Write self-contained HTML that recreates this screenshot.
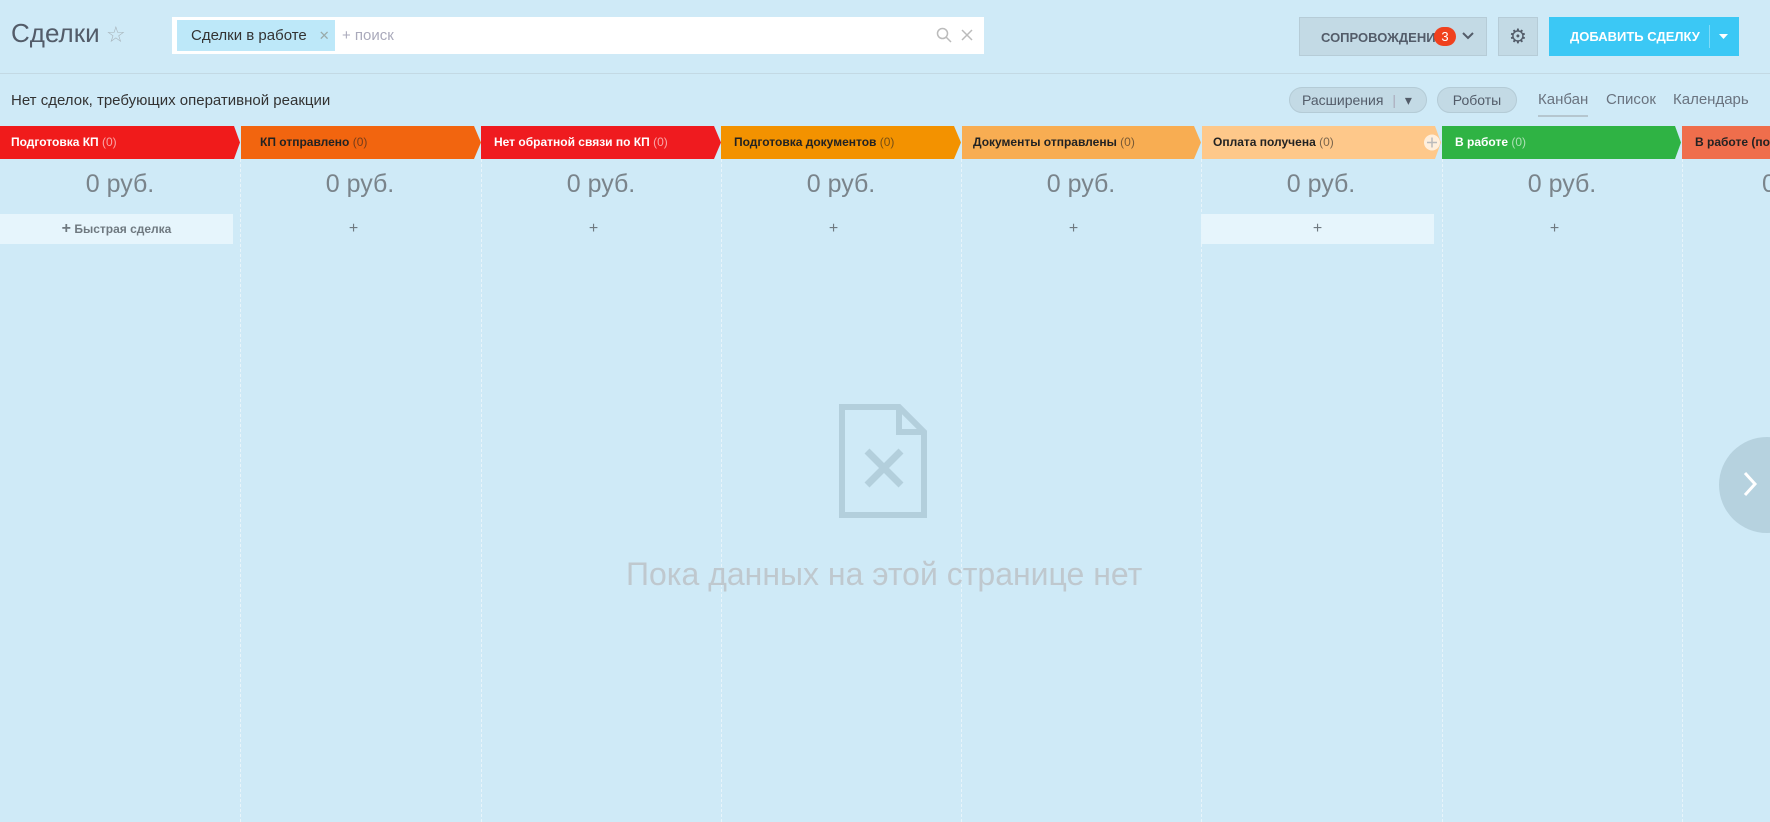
<!DOCTYPE html>
<html><head><meta charset="utf-8"><style>
*{box-sizing:border-box;margin:0;padding:0}
body{width:1770px;height:822px;overflow:hidden;background:#cfeaf7;font-family:"Liberation Sans","DejaVu Sans",sans-serif;position:relative;color:#333}
.a{position:absolute}
.title{left:11px;top:18px;font-size:26px;color:#535c69;font-weight:300}
.star{left:106px;top:22px;font-size:22px;color:#a8b4bb}
.search{left:172px;top:17px;width:812px;height:37px;background:#fff}
.chip{left:177px;top:20px;width:158px;height:31px;background:#bde8f9;font-size:15px;color:#333;padding:7px 0 0 14px}
.chip span{color:#9aa;margin-left:12px;font-size:13px}
.ph{left:342px;top:27px;font-size:15px;color:#aab}
.btn{top:17px;height:39px;font-size:13px;font-weight:bold;text-align:center;line-height:39px}
.sep{left:0;top:73px;width:1770px;height:1px;background:#c3d9e4}
.sub{left:11px;top:92px;font-size:15px;color:#333}
.pill{top:87px;height:26px;border-radius:13px;background:#c3dae5;border:1px solid #b4cbd6;font-size:14px;color:#535c69;line-height:24px;text-align:center}
.tab{top:91px;font-size:15px;color:#6a737f}
.stage{top:126px;height:33px;font-size:12px;font-weight:bold;line-height:33px;padding-left:11px;white-space:nowrap;overflow:hidden}
.stage i{font-style:normal;font-weight:normal;opacity:.6}
.sum{top:170px;width:240px;text-align:center;font-size:25px;color:#7a848b;font-weight:300}
.col{top:159px;width:0;height:663px;border-left:1px dashed #e8f4fa}
.plus{top:214px;width:233px;height:30px;text-align:center;font-size:16px;line-height:30px;color:#6f7980}
</style></head><body>
<div class="a title">Сделки</div>
<div class="a star">☆</div>
<div class="a search"></div>
<div class="a chip">Сделки в работе<span>✕</span></div>
<div class="a ph">+ поиск</div>
<svg class="a" style="left:936px;top:27px" width="16" height="16"><circle cx="6.5" cy="6.5" r="5" fill="none" stroke="#bbb" stroke-width="1.5"/><line x1="10" y1="10" x2="15" y2="15" stroke="#bbb" stroke-width="1.5"/></svg>
<svg class="a" style="left:961px;top:29px" width="12" height="12"><path d="M1 1L11 11M11 1L1 11" stroke="#bbb" stroke-width="1.5"/></svg>
<div class="a btn" style="left:1299px;width:188px;background:#c3dae5;border:1px solid #b6ccd7;color:#535c69;text-align:left;padding-left:21px">СОПРОВОЖДЕНИЕ</div>
<div class="a" style="left:1434px;top:27px;width:22px;height:19px;border-radius:10px;background:#f0411e;color:#fff;font-size:13px;text-align:center;line-height:19px">3</div>
<svg class="a" style="left:1462px;top:32px" width="12" height="8"><path d="M1 1L6 6L11 1" stroke="#535c69" stroke-width="2" fill="none"/></svg>
<div class="a btn" style="left:1498px;width:40px;background:#c3dae5;border:1px solid #b6ccd7;color:#535c69;font-size:20px">⚙</div>
<div class="a btn" style="left:1549px;width:190px;background:#3bc8f5;color:#fff;text-align:left;padding-left:21px">ДОБАВИТЬ СДЕЛКУ</div>
<div class="a" style="left:1709px;top:25px;width:1px;height:23px;background:#7fdbf9"></div>
<svg class="a" style="left:1719px;top:34px" width="9" height="6"><path d="M0 0H9L4.5 5z" fill="#fff"/></svg>
<div class="a sep"></div>
<div class="a sub">Нет сделок, требующих оперативной реакции</div>
<div class="a pill" style="left:1289px;width:138px;text-align:left;padding-left:12px">Расширения <span style="color:#aab;margin:0 5px">|</span> ▾</div>
<div class="a pill" style="left:1437px;width:80px">Роботы</div>
<div class="a tab" style="left:1538px">Канбан</div>
<div class="a" style="left:1538px;top:115px;width:50px;height:2px;background:#b5c6cf"></div>
<div class="a tab" style="left:1606px">Список</div>
<div class="a tab" style="left:1673px">Календарь</div>

<svg class="a" style="left:0;top:126px" width="1770" height="33">
<polygon points="0,0 234,0 240,16.5 234,33 0,33" fill="#f01b1b"/>
<polygon points="241,0 474,0 481,16.5 474,33 241,33" fill="#f2650f"/>
<polygon points="481,0 714,0 721,16.5 714,33 481,33" fill="#ef1b1f"/>
<polygon points="721,0 954,0 961,16.5 954,33 721,33" fill="#f39200"/>
<polygon points="962,0 1194,0 1201,16.5 1194,33 962,33" fill="#f8ad52"/>
<polygon points="1202,0 1435,0 1441,16.5 1435,33 1202,33" fill="#fec88a"/>
<polygon points="1442,0 1675,0 1681,16.5 1675,33 1442,33" fill="#2fb344"/>
<rect x="1682" y="0" width="88" height="33" fill="#ef6e4c"/>
<circle cx="1432" cy="16.5" r="8" fill="#fff" opacity=".7"/>
<path d="M1427 16.5h10M1432 11.5v10" stroke="#bbb" stroke-width="1.5"/>
</svg>
<div class="a stage" style="left:0;width:234px;color:#fff">Подготовка КП <i>(0)</i></div>
<div class="a stage" style="left:249px;width:222px;color:#222">КП отправлено <i>(0)</i></div>
<div class="a stage" style="left:483px;width:230px;color:#fff">Нет обратной связи по КП <i>(0)</i></div>
<div class="a stage" style="left:723px;width:230px;color:#222">Подготовка документов <i>(0)</i></div>
<div class="a stage" style="left:962px;width:230px;color:#222">Документы отправлены <i>(0)</i></div>
<div class="a stage" style="left:1202px;width:220px;color:#222">Оплата получена <i>(0)</i></div>
<div class="a stage" style="left:1444px;width:230px;color:#fff">В работе <i>(0)</i></div>
<div class="a stage" style="left:1684px;width:86px;color:#222">В работе (по</div>

<div class="a col" style="left:240px"></div><div class="a col" style="left:481px"></div><div class="a col" style="left:721px"></div><div class="a col" style="left:961px"></div><div class="a col" style="left:1201px"></div><div class="a col" style="left:1442px"></div><div class="a col" style="left:1682px"></div>

<div class="a sum" style="left:0">0 руб.</div>
<div class="a sum" style="left:240px">0 руб.</div>
<div class="a sum" style="left:481px">0 руб.</div>
<div class="a sum" style="left:721px">0 руб.</div>
<div class="a sum" style="left:961px">0 руб.</div>
<div class="a sum" style="left:1201px">0 руб.</div>
<div class="a sum" style="left:1442px">0 руб.</div>
<div class="a sum" style="left:1682px;text-align:left;padding-left:80px">0</div>

<div class="a plus" style="left:0;background:#e6f5fc;font-size:12px;font-weight:bold;color:#6f7980"><span style="font-size:16px">+</span> Быстрая сделка</div>
<div class="a plus" style="left:237px">+</div>
<div class="a plus" style="left:477px">+</div>
<div class="a plus" style="left:717px">+</div>
<div class="a plus" style="left:957px">+</div>
<div class="a plus" style="left:1201px;background:#e6f5fc">+</div>
<div class="a plus" style="left:1438px">+</div>

<svg class="a" style="left:839px;top:404px" width="88" height="114">
<path d="M3 3H60L85 28V111H3Z" fill="none" stroke="#b3cfdc" stroke-width="6"/>
<path d="M60 3V28H85" fill="none" stroke="#b3cfdc" stroke-width="6"/>
<path d="M28 47L62 81M62 47L28 81" stroke="#b3cfdc" stroke-width="7"/>
</svg>
<div class="a" style="left:626px;top:556px;font-size:32px;color:#bfc8ce">Пока данных на этой странице нет</div>

<div class="a" style="left:1719px;top:437px;width:96px;height:96px;border-radius:48px;background:#b6d2df"></div>
<svg class="a" style="left:1742px;top:470px" width="16" height="28"><path d="M3 3L13 14L3 25" stroke="#fff" stroke-width="3" fill="none"/></svg>
</body></html>
